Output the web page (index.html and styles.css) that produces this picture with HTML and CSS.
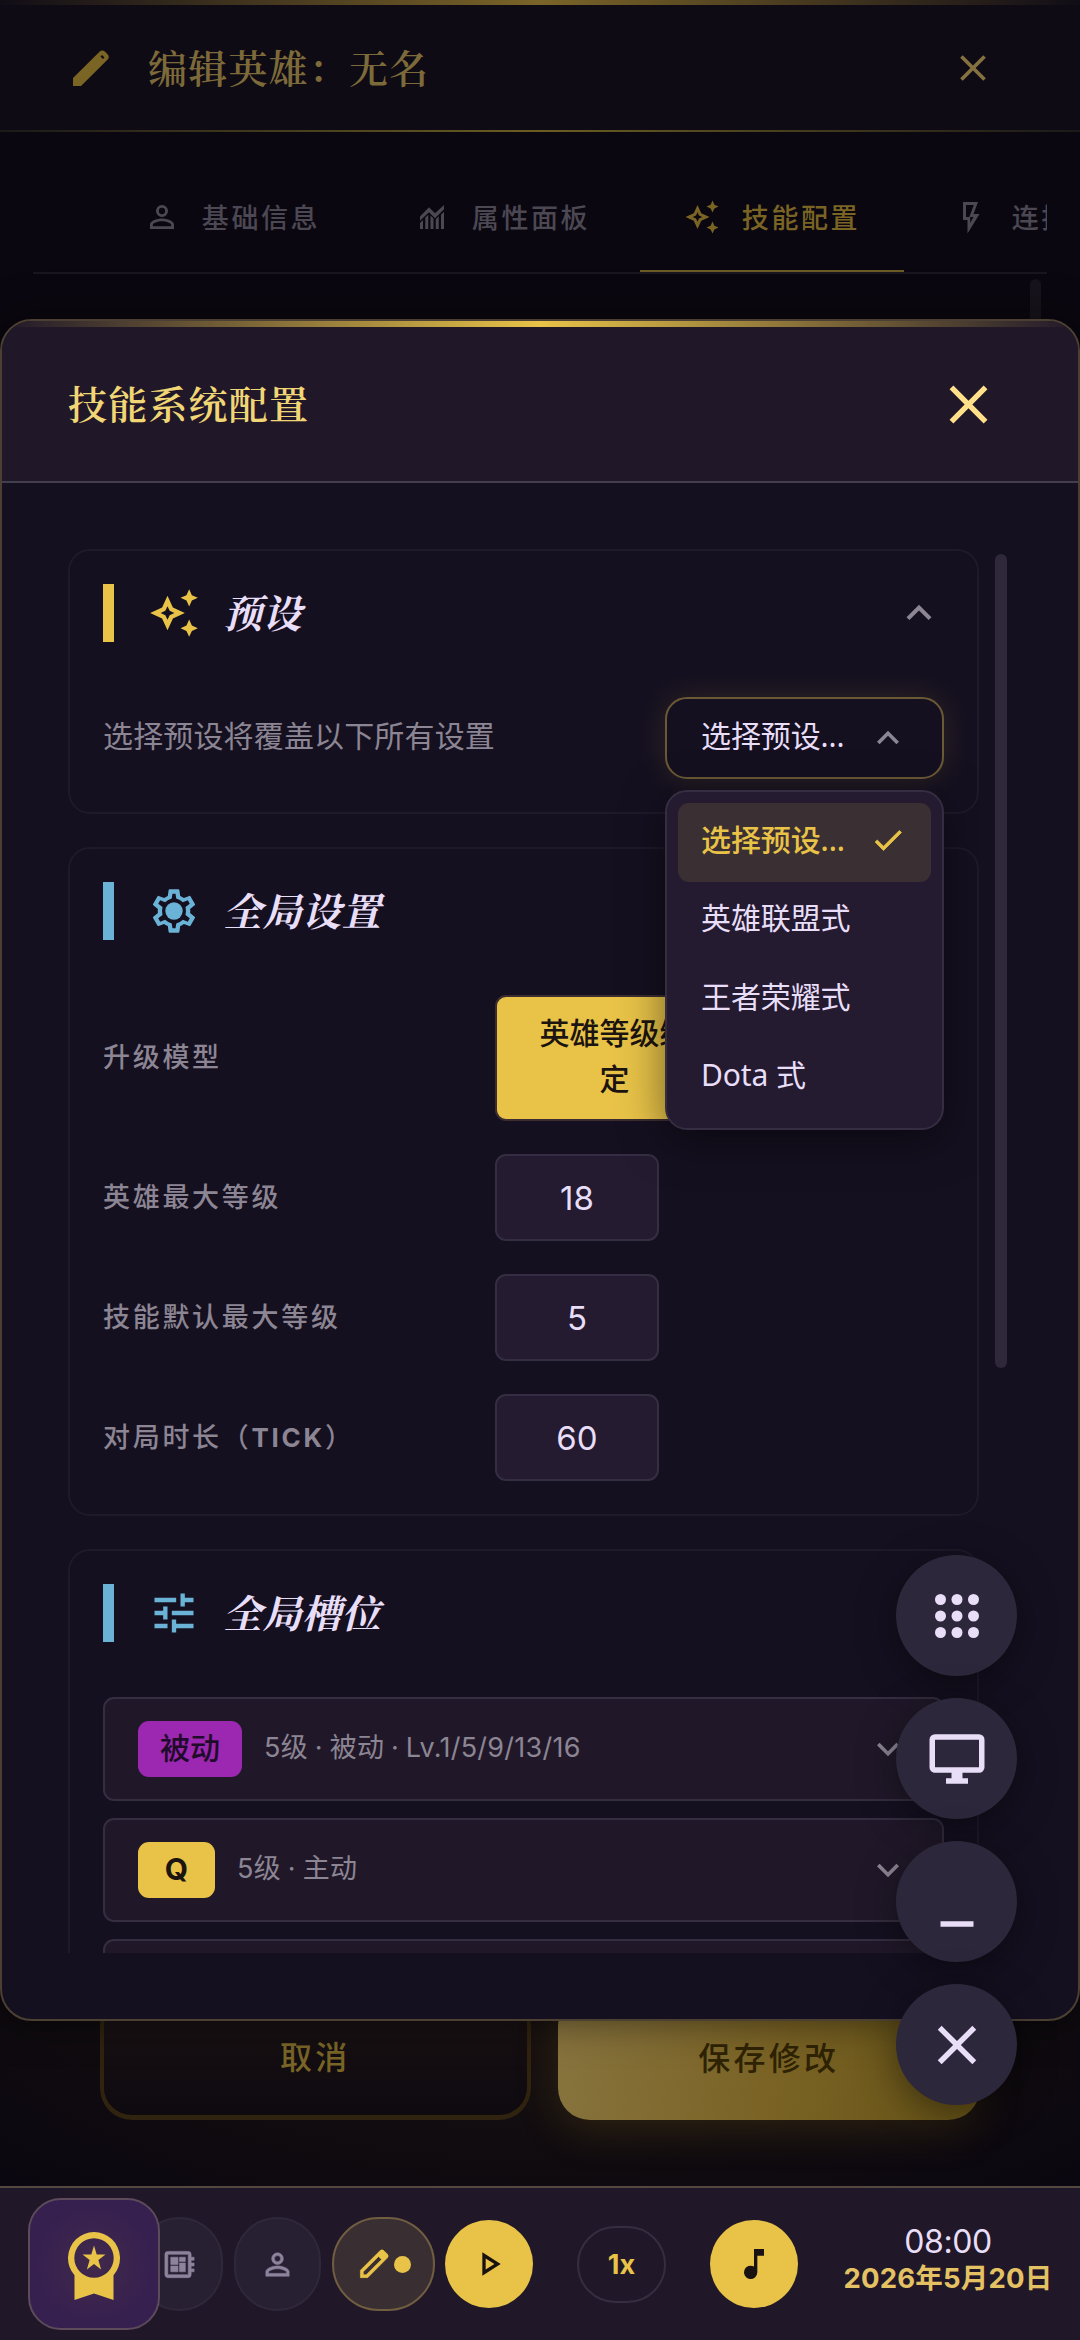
FILE: index.html
```html
<!DOCTYPE html>
<html lang="zh-CN">
<head>
<meta charset="utf-8">
<title>技能系统配置</title>
<link rel="stylesheet" href="styles.css">
</head>
<body>
<svg class="defs" aria-hidden="true">
  <symbol id="i-close" viewBox="0 0 24 24"><path d="M19 6.41 17.59 5 12 10.59 6.41 5 5 6.41 10.59 12 5 17.59 6.41 19 12 13.41 17.59 19 19 17.59 13.41 12z"/></symbol>
  <symbol id="i-person" viewBox="0 0 24 24"><path d="M12 5.9a2.1 2.1 0 1 1 0 4.2 2.1 2.1 0 0 1 0-4.2m0 9c2.97 0 6.1 1.46 6.1 2.1v1.1H5.9V17c0-.64 3.13-2.1 6.1-2.1M12 4a4 4 0 1 0 0 8 4 4 0 0 0 0-8m0 9c-2.67 0-8 1.34-8 4v3h16v-3c0-2.66-5.33-4-8-4"/></symbol>
  <symbol id="i-chart" viewBox="0 0 24 24"><path d="M4 20v-4l2-2v6zm3.5 0v-7.500l2-2V20zM11 20v-9l2 2v7zm3.500 0v-6.500l2-2V20zM18 20V10.500l2-2V20zM4 14.500v-2.800l6-6.200 4 4L20 4v2.800l-6 6-4-4z"/></symbol>
  <symbol id="i-spark" viewBox="0 0 24 24"><path d="m19 9 1.250-2.750L23 5l-2.750-1.250L19 1l-1.250 2.750L15 5l2.750 1.250zm0 6-1.250 2.750L15 19l2.750 1.250L19 23l1.250-2.750L23 19l-2.750-1.250zm-7.500-5.500L9 4 6.500 9.500 1 12l5.500 2.500L9 20l2.500-5.500L17 12zm-1.510 3.490L9 15.170l-.99-2.180L5.830 12l2.180-.99L9 8.830l.99 2.180 2.180.99z"/></symbol>
  <symbol id="i-bolt" viewBox="0 0 24 24"><path d="M6 2v12h3v9l8-13h-4l3-8zm2 2h5.200l-3 8H13l-2.200 4V12H8z"/></symbol>
  <symbol id="i-gear" viewBox="0 0 24 24"><path d="M19.430 12.980c.04-.32.070-.64.070-.98s-.03-.66-.07-.98l2.110-1.650c.19-.15.240-.42.120-.64l-2-3.460a.5.5 0 0 0-.61-.22l-2.490 1a7.300 7.300 0 0 0-1.690-.98l-.38-2.650A.49.49 0 0 0 14 2h-4a.49.49 0 0 0-.49.420l-.38 2.650c-.61.250-1.170.590-1.690.980l-2.490-1a.5.5 0 0 0-.61.220l-2 3.460c-.13.220-.07.490.120.640l2.110 1.650A8 8 0 0 0 4.500 12c0 .33.030.66.070.98l-2.110 1.650a.5.5 0 0 0-.12.640l2 3.460c.12.220.39.290.610.220l2.490-1c.52.400 1.080.730 1.690.980l.38 2.650c.03.240.24.420.490.420h4c.25 0 .46-.18.490-.42l.38-2.650c.61-.25 1.170-.59 1.690-.98l2.490 1c.22.090.49 0 .61-.22l2-3.460a.5.500 0 0 0-.12-.64zm-1.980-1.710c.04.310.050.520.050.730s-.02.430-.05.730l-.14 1.130 1.960 1.530-.88 1.530-2.290-.92-.93.710q-.52.400-1.060.62l-1.060.43-.35 2.240h-1.400l-.35-2.240-1.060-.43q-.56-.23-1.050-.61l-.94-.72-2.290.92-.88-1.530 1.960-1.530-.14-1.130a6 6 0 0 1 0-1.470l.14-1.130-1.960-1.530.88-1.530 2.290.92.930-.71q.52-.4 1.060-.62l1.060-.43L11.300 4h1.400l.35 2.240 1.060.43q.56.23 1.050.610l.94.720 2.290-.92.880 1.530-1.960 1.530z"/><circle cx="12" cy="12" r="4"/></symbol>
  <symbol id="i-tune" viewBox="0 0 24 24"><path d="M3 17v2h6v-2zM3 5v2h10V5zm10 16v-2h8v-2h-8v-2h-2v6zM7 9v2H3v2h4v2h2V9zm14 4v-2H11v2zm-6-4h2V7h4V5h-4V3h-2z"/></symbol>
  <symbol id="i-up" viewBox="0 0 24 24"><path d="m12 8-6 6 1.410 1.410L12 10.830l4.590 4.580L18 14z"/></symbol>
  <symbol id="i-down" viewBox="0 0 24 24"><path d="M16.590 8.590 12 13.170 7.410 8.590 6 10l6 6 6-6z"/></symbol>
  <symbol id="i-check" viewBox="0 0 24 24"><path d="M9 16.170 4.830 12l-1.420 1.410L9 19 21 7l-1.410-1.410z"/></symbol>
  <symbol id="i-apps" viewBox="0 0 24 24"><circle cx="6" cy="6" r="2"/><circle cx="12" cy="6" r="2"/><circle cx="18" cy="6" r="2"/><circle cx="6" cy="12" r="2"/><circle cx="12" cy="12" r="2"/><circle cx="18" cy="12" r="2"/><circle cx="6" cy="18" r="2"/><circle cx="12" cy="18" r="2"/><circle cx="18" cy="18" r="2"/></symbol>
  <symbol id="i-monitor" viewBox="0 0 24 24"><path d="M20 3H4a2 2 0 0 0-2 2v10c0 1.100.9 2 2 2h6v2H8v2h8v-2h-2v-2h6a2 2 0 0 0 2-2V5a2 2 0 0 0-2-2m0 12H4V5h16z"/></symbol>
  <symbol id="i-min" viewBox="0 0 24 24"><path d="M6 19h12v2H6z"/></symbol>
  <symbol id="i-board" viewBox="0 0 24 24"><path d="M22 9V7h-2V5a2 2 0 0 0-2-2H4a2 2 0 0 0-2 2v14c0 1.100.9 2 2 2h14a2 2 0 0 0 2-2v-2h2v-2h-2v-2h2v-2h-2V9zm-4 10H4V5h14zM6 13h5v4H6zm6-6h4v3h-4zM6 7h5v5H6zm6 4h4v6h-4z"/></symbol>
  <symbol id="i-edit" viewBox="0 0 24 24"><path d="M3 21v-5L16.400 2.600a2 2 0 0 1 2.800 0l2.200 2.200a2 2 0 0 1 0 2.800L8 21zm2-2h2L17.500 8.500l-2-2L5 17z" fill-rule="evenodd"/></symbol>
  <symbol id="i-play" viewBox="0 0 24 24"><path d="M10 8.640 15.270 12 10 15.360zM8 5v14l11-7z"/></symbol>
  <symbol id="i-note" viewBox="0 0 24 24"><path d="M12 3v10.550A4 4 0 1 0 14 17V7h4V3z"/></symbol>
  <symbol id="i-medal" viewBox="0 0 52 68"><path fill-rule="evenodd" d="M6.500 43.300A26 26 0 1 1 45.500 43.300V68L26 61.500 6.500 68zM26 6.300a19.700 19.700 0 1 0 0 39.400 19.700 19.700 0 0 0 0-39.400"/><path d="m26 13.500 2.700 9H37.500l-7.100 5.400 2.700 9.500L26 32l-7.100 5.400 2.700-9.500-7.100-5.400h8.800z"/></symbol>
</svg>

<main class="editor">
  <header class="editor-head">
    <svg class="pen" viewBox="0 0 36 36"><path fill-rule="evenodd" d="M0 36v-8L26.500 1.800a4 4 0 0 1 5.600 0l2.300 2.300a4 4 0 0 1 0 5.600L8 36zM27.500 6.500l2.500 2.500 1.500-1.500L29 5z"/></svg>
    <h1>编辑英雄：无名</h1>
    <svg class="editor-close"><use href="#i-close"/></svg>
  </header>
  <nav class="tabs">
    <div class="tab"><svg><use href="#i-person"/></svg><span>基础信息</span></div>
    <div class="tab"><svg><use href="#i-chart"/></svg><span>属性面板</span></div>
    <div class="tab active"><svg><use href="#i-spark"/></svg><span>技能配置</span></div>
    <div class="tab"><svg><use href="#i-bolt"/></svg><span>连招配置</span></div>
  </nav>
  <div class="editor-scroll"></div>
  <footer class="editor-foot">
    <button class="cancel">取消</button>
    <button class="save">保存修改</button>
  </footer>
</main>

<section class="modal">
  <header class="modal-head">
    <h2>技能系统配置</h2>
    <svg><use href="#i-close"/></svg>
  </header>
  <div class="modal-body">
    <div class="sections">
      <article class="card card-preset">
        <div class="card-head gold"><i></i><svg><use href="#i-spark"/></svg><h3>预设</h3><svg class="chev"><use href="#i-up"/></svg></div>
        <div class="preset-row">
          <span class="hint">选择预设将覆盖以下所有设置</span>
          <div class="select">
            <span>选择预设...</span><svg><use href="#i-up"/></svg>
            <ul class="menu">
              <li class="on"><span>选择预设...</span><svg><use href="#i-check"/></svg></li>
              <li><span>英雄联盟式</span></li>
              <li><span>王者荣耀式</span></li>
              <li><span>Dota 式</span></li>
            </ul>
          </div>
        </div>
      </article>
      <article class="card card-global">
        <div class="card-head"><i></i><svg><use href="#i-gear"/></svg><h3>全局设置</h3></div>
        <div class="fields">
          <label>升级模型</label><div class="seg">英雄等级绑定</div>
          <label>英雄最大等级</label><div class="num">18</div>
          <label>技能默认最大等级</label><div class="num">5</div>
          <label>对局时长（<b>TICK</b>）</label><div class="num">60</div>
        </div>
      </article>
      <article class="card card-slots">
        <div class="card-head"><i></i><svg><use href="#i-tune"/></svg><h3>全局槽位</h3></div>
        <div class="slots">
          <div class="slot"><b class="passive">被动</b><span>5级 · 被动 · Lv.1/5/9/13/16</span><svg><use href="#i-down"/></svg></div>
          <div class="slot"><b>Q</b><span>5级 · 主动</span><svg><use href="#i-down"/></svg></div>
          <div class="slot"></div>
        </div>
      </article>
    </div>
    <div class="scrollbar"></div>
  </div>
</section>

<footer class="dock">
  <div class="medal"><svg><use href="#i-medal"/></svg></div>
  <div class="pill first"><svg><use href="#i-board"/></svg></div>
  <div class="pill"><svg><use href="#i-person"/></svg></div>
  <div class="pill editing"><svg><use href="#i-edit"/></svg><i></i></div>
  <div class="round"><svg><use href="#i-play"/></svg></div>
  <div class="speed">1x</div>
  <div class="round"><svg class="note"><use href="#i-note"/></svg></div>
  <div class="clock"><time>08:00</time><strong>2026年5月20日</strong></div>
</footer>

<aside class="fabs">
  <div class="fab"><svg><use href="#i-apps"/></svg></div>
  <div class="fab"><svg><use href="#i-monitor"/></svg></div>
  <div class="fab"><svg><use href="#i-min"/></svg></div>
  <div class="fab"><svg><use href="#i-close"/></svg></div>
</aside>
</body>
</html>
```
FILE: styles.css
```css
:root {
  --gold: #e8c348;
  --text: #e8def8;
  --muted: #8c8593;
  --blue: #6bb3d6;
  --panel: #201829;
  --body: #151020;
}
* { box-sizing: border-box; }
body {
  margin: 0;
  width: 1080px;
  height: 2340px;
  position: relative;
  overflow: hidden;
  display: flex;
  flex-direction: column;
  background: #0b0710;
  color: var(--text);
  font-family: Inter, "Noto Sans CJK SC", sans-serif;
}
h1, h2, h3 {
  margin: 0;
  font-family: "Noto Serif CJK SC", "Noto Sans CJK SC", serif;
  font-size: 39px;
  letter-spacing: 1.200px;
  font-weight: 600;
  line-height: 58px;
}
svg { display: block; fill: currentColor; flex: none; }
.defs { position: absolute; width: 0; height: 0; }

/* dimmed editor page */
.editor { height: 2186px; display: flex; flex-direction: column; }
.editor-head {
  height: 132px;
  padding: 3px 85px 0 73px;
  display: flex;
  align-items: center;
  color: #7b6524;
  background:
    linear-gradient(90deg, #110d16, #7a6428 50%, #110d16) 0 0 / 100% 5px no-repeat,
    linear-gradient(90deg, #1c1918, #6b5d22 50%, #1c1918) 0 130px / 100% 2px no-repeat,
    #0f0b14;
}
.pen { width: 36px; height: 36px; margin-right: 39px; }
.editor-head h1 { flex: 1; color: #7d6a3a; padding-bottom: 3px; }
.editor-close { width: 44px; height: 44px; color: #85703f; }
.tabs {
  width: 1014px;
  height: 142px;
  margin-left: 33px;
  padding: 30px 0 0 67px;
  display: flex;
  gap: 6px;
  overflow: hidden;
  border-bottom: 2px solid #19161f;
}
.tab {
  flex: none;
  width: 264px;
  height: 110px;
  display: flex;
  align-items: center;
  justify-content: center;
  gap: 22px;
  color: #4c4853;
  font-size: 27px;
  font-weight: 500;
  letter-spacing: 2.600px;
}
.tab svg { width: 36px; height: 36px; }
.tab span { padding-bottom: 2px; }
.tab.active { color: #7a6424; border-bottom: 2px solid #6b5a24; padding-top: 2px; }
.editor-scroll {
  width: 11px;
  height: 400px;
  margin: 5px 0 0 1030px;
  border-radius: 6px;
  background: #17131c;
}
.editor-foot {
  margin-top: auto;
  height: 232px;
  padding: 40px 100px 66px;
  display: flex;
  gap: 27px;
  background: radial-gradient(ellipse at 50% 0, #1d1512, #0f0b0f 65%, #0b0710);
}
.editor-foot button {
  flex: 1;
  padding: 3px 0 0;
  border-radius: 32px;
  font: 500 32px/46px Inter, "Noto Sans CJK SC", sans-serif;
  letter-spacing: 3.200px;
}
.editor-foot .cancel { background: linear-gradient(#1a1213, #0e0a10); border: 4px solid #30230f; border-bottom-width: 5px; color: #796527; }
.editor-foot .save {
  border: 0;
  color: #2f2305;
  background: linear-gradient(100deg, #88743f, #7a6325 50%, #665316);
  box-shadow: 0 10px 40px rgba(120, 90, 20, .28);
}

/* modal */
.modal {
  position: absolute;
  left: 0;
  top: 319px;
  width: 1080px;
  height: 1702px;
  border: 2px solid #4c4033;
  border-radius: 32px;
  background: var(--body);
  overflow: hidden;
  box-shadow: 0 0 40px rgba(0, 0, 0, .5);
}
.modal-head {
  height: 162px;
  padding: 6px 77px 0 66px;
  display: flex;
  align-items: center;
  justify-content: space-between;
  border-bottom: 2px solid #433e4c;
  background: linear-gradient(90deg, rgba(232,195,72,0), #e8c348 50%, rgba(232,195,72,0)) 0 0 / 100% 6px no-repeat, var(--panel);
}
.modal-head h2 { color: #f1d675; padding-bottom: 5px; }
.modal-head svg { width: 65px; height: 65px; color: #ffe08a; }
.modal-body { display: flex; padding: 66px 0 0 66px; }
.sections { width: 911px; height: 1404px; overflow: hidden; display: flex; flex-direction: column; gap: 33px; }
.scrollbar { width: 12px; height: 814px; margin: 5px 0 0 16px; border-radius: 6px; background: #2f283a; }
.card {
  flex: none;
  border: 2px solid #1f1929;
  border-radius: 22px;
  padding: 33px 33px 0;
}
.card-preset { position: relative; z-index: 1; height: 265px; }
.card-global { height: 669px; }
.card-slots { height: 900px; }
.card-head { display: flex; align-items: center; height: 58px; color: var(--blue); }
.card-head.gold { color: var(--gold); }
.card-head i { width: 11px; height: 58px; background: currentColor; margin-right: 34px; }
.card-head svg { width: 52px; height: 52px; margin-right: 23px; }
.card-head h3 { flex: 1; padding-bottom: 4px; color: var(--text); font-style: italic; font-weight: 700; letter-spacing: .5px; }
.card-head svg.chev { width: 50px; height: 50px; margin: 0; color: var(--muted); }
.preset-row {
  display: flex;
  align-items: center;
  justify-content: space-between;
  margin-top: 55px;
  font-size: 30px;
  color: var(--muted);
}
.hint { padding-bottom: 9px; letter-spacing: .15px; }
.select {
  position: relative;
  width: 279px;
  height: 82px;
  padding: 0 32px 0 34px;
  display: flex;
  align-items: center;
  justify-content: space-between;
  border: 2px solid #6b5935;
  border-radius: 22px;
  background: var(--body);
  color: var(--text);
  font-family: "Noto Sans", "Noto Sans CJK SC", sans-serif;
  box-shadow: 0 0 32px rgba(232, 195, 72, .12);
}
.select span { padding-bottom: 9px; letter-spacing: -.1px; }
.select > svg { width: 44px; height: 44px; color: var(--muted); }
.menu {
  position: absolute;
  z-index: 2;
  left: -2px;
  top: 91px;
  width: 279px;
  margin: 0;
  padding: 11px;
  list-style: none;
  border: 2px solid #352d42;
  border-radius: 22px;
  background: #241b30;
  box-shadow: 0 11px 44px rgba(0, 0, 0, .5);
}
.menu li {
  height: 78.500px;
  padding: 0 25px 0 23px;
  display: flex;
  align-items: center;
  justify-content: space-between;
  border-radius: 11px;
}
.menu .on { background: #3a2f33; color: var(--gold); font-weight: 500; }
.menu svg { width: 36px; height: 36px; margin-bottom: 4px; stroke: currentColor; stroke-width: .5; }
.fields {
  display: grid;
  grid-template-columns: 240px 164px;
  grid-template-rows: 126px 87px 87px 87px;
  column-gap: 152px;
  row-gap: 33px;
  margin-top: 55px;
  align-items: center;
}
.fields label { padding-bottom: 5px; white-space: nowrap; color: var(--muted); font-size: 27px; font-weight: 500; letter-spacing: 2.700px; }
.fields label b { font-weight: 700; font-size: 26px; }
.seg {
  width: 239px;
  height: 126px;
  padding: 13px 42px;
  border: 2px solid #3b2d30;
  border-radius: 11px;
  background: var(--gold);
  color: #1c1410;
  font-size: 30px;
  font-weight: 500;
  line-height: 46px;
  text-align: center;
}
.num {
  height: 87px;
  display: flex;
  align-items: center;
  justify-content: center;
  border: 2px solid #352d42;
  border-radius: 11px;
  background: #241b30;
  font-size: 33px;
}
.slots { display: flex; flex-direction: column; gap: 17px; margin-top: 55px; }
.slot {
  height: 104px;
  padding: 0 32px 0 33px;
  display: flex;
  align-items: center;
  border: 2px solid #352d40;
  border-radius: 11px;
  background: var(--panel);
  color: var(--muted);
  font-size: 27px;
}
.slot b {
  height: 56px;
  padding: 0 22px;
  min-width: 77px;
  text-align: center;
  border-radius: 11px;
  background: var(--gold);
  color: #1c1410;
  font-size: 30px;
  line-height: 54px;
  margin-right: 22px;
}
.slot b.passive { background: #9c27b0; color: #200c2a; font-weight: 500; }
.slot span { flex: 1; padding-bottom: 7px; letter-spacing: .25px; word-spacing: -1px; }
.slot svg { width: 44px; height: 44px; }

/* bottom dock */
.dock {
  height: 154px;
  padding: 0 0 0 28px;
  display: flex;
  align-items: center;
  border-top: 2px solid #544941;
  background: var(--panel);
}
.medal {
  position: relative;
  z-index: 1;
  width: 132px;
  height: 132px;
  display: grid;
  place-items: center;
  border: 2px solid #5d4a5a;
  border-radius: 33px;
  background: radial-gradient(circle, #41294b, #36204f 65%);
  color: var(--gold);
}
.medal svg { width: 52px; height: 68px; margin-top: 4px; }
.pill {
  width: 87px;
  height: 94px;
  margin-right: 11px;
  display: flex;
  align-items: center;
  justify-content: center;
  border: 2px solid #2f283b;
  border-radius: 47px;
  background: #272033;
  color: #8d839c;
}
.pill.first { margin-left: -24px; }
.pill svg { width: 35px; height: 35px; stroke: currentColor; stroke-width: .4; }
.editing { width: 103px; gap: 3px; margin-right: 10px; border-color: #715d40; background: #392e32; color: var(--gold); }
.editing i { width: 17px; height: 17px; border-radius: 50%; background: currentColor; }
.round {
  width: 88px;
  height: 88px;
  display: grid;
  place-items: center;
  border-radius: 50%;
  background: var(--gold);
  color: #1a1210;
}
.round svg { width: 40px; height: 40px; }
.speed {
  width: 89px;
  height: 77px;
  margin: 0 44px;
  display: grid;
  place-items: center;
  border: 2px solid #352e40;
  border-radius: 39px;
  color: var(--gold);
  font-size: 27px;
  font-weight: 700;
}
.clock { width: 210px; margin-left: 45px; padding-bottom: 10px; text-align: center; white-space: nowrap; }
.clock time { display: block; font-size: 32px; line-height: 38px; letter-spacing: -.4px; }
.clock strong { display: block; margin: 0 -10px; color: #e4c264; font-size: 27.500px; line-height: 34px; letter-spacing: .2px; }

/* floating buttons */
.fabs { position: absolute; left: 896px; top: 1555px; display: flex; flex-direction: column; gap: 22px; }
.fab {
  width: 121px;
  height: 121px;
  display: grid;
  place-items: center;
  border-radius: 50%;
  background: #2d273b;
  box-shadow: 0 8px 40px rgba(0, 0, 0, .45);
}
.fab svg { width: 66px; height: 66px; }
```
